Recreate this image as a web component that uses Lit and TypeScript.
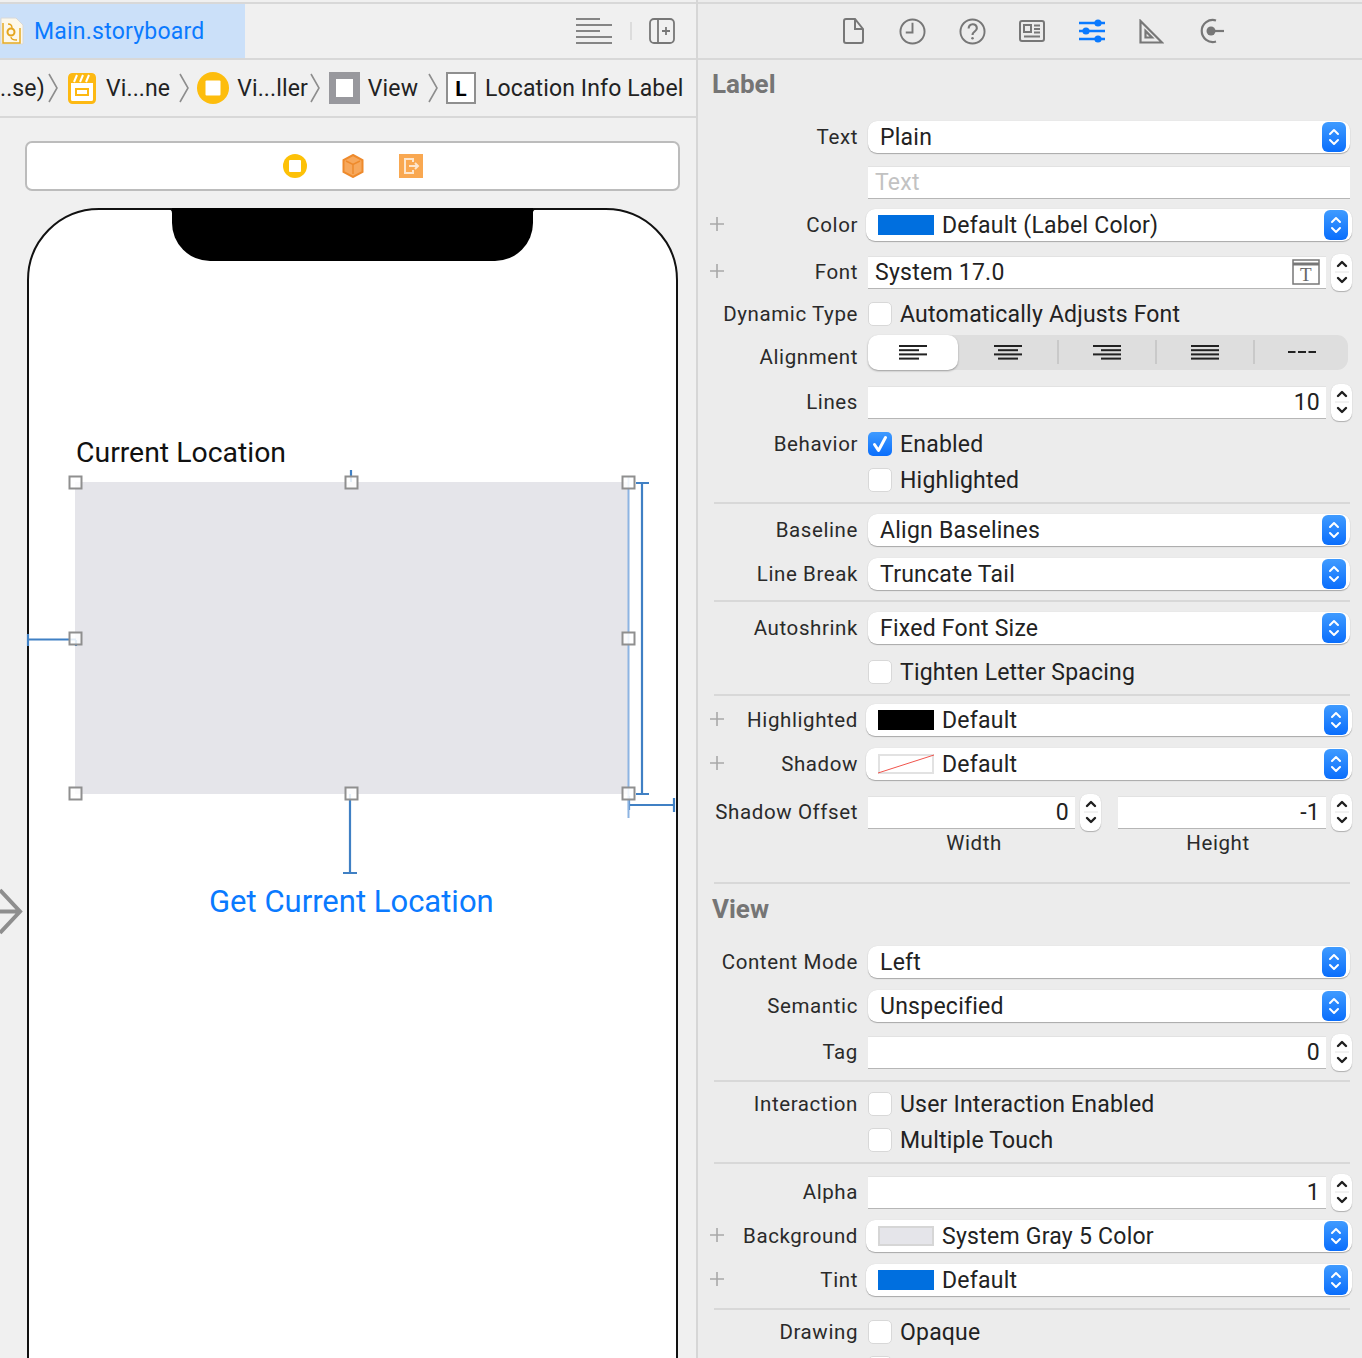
import { LitElement, html, css, svg } from 'lit';
import { customElement } from 'lit/decorators.js';

const updown = html`<svg width="12" height="20" viewBox="0 0 12 20" fill="none" stroke="currentColor" stroke-width="2" stroke-linecap="round" stroke-linejoin="round"><path d="M2 7l4-4 4 4M2 13l4 4 4-4"/></svg>`;

const plus = html`<svg class="plus" width="14" height="14" viewBox="0 0 14 14"><path d="M7 0v14M0 7h14" stroke="#a8a8a8" stroke-width="1.6"/></svg>`;

const alignIcon = (widths: number[], anchor: 'l' | 'c' | 'r') => html`<svg width="28" height="16" viewBox="0 0 28 16">
  ${widths.map((w, i) => {
    const x = anchor === 'l' ? 0 : anchor === 'c' ? (28 - w) / 2 : 28 - w;
    return svg`<rect x=${x} y=${1 + i * 4.2} width=${w} height="2" fill="#222"/>`;
  })}
</svg>`;

@customElement('app-root')
export class AppRoot extends LitElement {
  static styles = css`
    :host {
      display: flex;
      width: 1362px;
      height: 1358px;
      overflow: hidden;
      font-family: Roboto, 'Liberation Sans', sans-serif;
      color: #222;
      background: #ececec;
    }
    .left {
      width: 696px;
      height: 1358px;
      display: flex;
      flex-direction: column;
      background: #f0f0f0;
      border-right: 2px solid #d6d6d6;
      flex: none;
    }
    .tabbar {
      height: 54px;
      margin-top: 2px;
      border-top: 2px solid #d8d8d8;
      border-bottom: 2px solid #d8d8d8;
      display: flex;
      align-items: center;
      flex: none;
    }
    .tab {
      width: 245px;
      height: 100%;
      background: #cbe0f9;
      display: flex;
      align-items: center;
      gap: 10px;
      color: #0a7aff;
      font-size: 23px;
      letter-spacing: 0.22px;
    }
    .tabtools {
      margin-left: auto;
      display: flex;
      align-items: center;
      padding-right: 21px;
    }
    .tooldiv {
      width: 2px;
      height: 18px;
      background: #dcdcdc;
      margin: 0 17px 0 18px;
    }
    .crumbs {
      height: 56px;
      border-bottom: 2px solid #d8d8d8;
      display: flex;
      align-items: center;
      font-size: 23px;
      letter-spacing: 0.12px;
      color: #222;
      white-space: nowrap;
      flex: none;
    }
    .crumbs > * {
      flex: none;
    }
    .c1 { width: 48px; }
    .ch { width: 10px; height: 30px; }
    .g2 { margin-left: 2px; }
    .g8 { margin-left: 8px; }
    .g9 { margin-left: 9px; }
    .g10 { margin-left: 10px; }
    .canvas {
      position: relative;
      flex: 1;
      overflow: hidden;
      padding: 23px 16px 0 25px;
    }
    .dock {
      height: 50px;
      box-sizing: border-box;
      background: #fff;
      border: 2px solid #bcbcbc;
      border-radius: 7px;
      display: flex;
      align-items: center;
      justify-content: center;
      gap: 35px;
    }
    .phone {
      position: absolute;
      left: 27px;
      top: 90px;
      width: 651px;
      height: 1400px;
      box-sizing: border-box;
      background: #fff;
      border: 2px solid #111;
      border-radius: 72px;
    }
    .notch {
      position: absolute;
      left: 143px;
      top: -2px;
      width: 361px;
      height: 53px;
      background: #000;
      border-radius: 0 0 38px 38px;
    }
    .canvas-text {
      position: absolute;
      white-space: nowrap;
    }
    .current {
      left: 47px;
      top: 225px;
      font-size: 28.4px;
      line-height: 36px;
      color: #111;
    }
    .getloc {
      left: 180px;
      top: 672px;
      font-size: 31px;
      line-height: 40px;
      color: #0a7aff;
    }
    .grayview {
      position: absolute;
      left: 46px;
      top: 272px;
      width: 553px;
      height: 312px;
      background: #e5e5ea;
    }
    .overlay {
      position: absolute;
      left: 0;
      top: 0;
      pointer-events: none;
    }
    .right {
      flex: 1;
      min-width: 0;
      display: flex;
      flex-direction: column;
      background: #ececec;
    }
    .toolbar {
      height: 54px;
      margin-top: 2px;
      border-top: 2px solid #d8d8d8;
      border-bottom: 2px solid #d8d8d8;
      display: flex;
      align-items: center;
      justify-content: center;
      padding-left: 4px;
      flex: none;
    }
    .toolbtn {
      width: 60px;
      display: flex;
      justify-content: center;
    }
    .doc {
      margin-left: 4px;
    }
    .tri {
      margin-right: 2px;
    }
    .form {
      flex: 1;
      overflow: hidden;
      box-sizing: border-box;
      padding: 0 12px 0 16px;
      display: grid;
      grid-template-columns: 144px 1fr;
      column-gap: 10px;
      align-items: center;
      grid-template-rows:
        58px 38px 52px 34px 60px 24px 52px 48px 36px 36px
        10px 44px 44px 10px 44px 44px 2px 48px 40px 56px
        6px 32px 10px 48px 52px 36px 56px 2px 44px 28px
        18px 40px 48px 40px 18px 28px 44px;
    }
    .title {
      grid-column: 1 / 3;
      align-self: start;
      font-size: 26px;
      line-height: 42px;
      font-weight: 700;
      color: #757575;
      margin-left: -2px;
    }
    .title.first {
      margin-top: 3px;
    }
    .sep {
      grid-column: 1 / 3;
      height: 2px;
      background: #d8d8d8;
    }
    .spacer {
      grid-column: 1 / 3;
    }
    .label {
      position: relative;
      text-align: right;
      font-size: 20.5px;
      letter-spacing: 0.6px;
      line-height: 24px;
      color: #2a2a2a;
      white-space: nowrap;
    }
    .label.low {
      padding-top: 9px;
    }
    .plus {
      position: absolute;
      left: -4px;
      top: 4px;
    }
    .ctl {
      min-width: 0;
    }
    .select {
      height: 32px;
      background: #fff;
      border-radius: 9px;
      box-shadow: 0 1px 1px rgba(0, 0, 0, 0.28), 0 0 1px rgba(0, 0, 0, 0.12);
      display: flex;
      align-items: center;
      padding-left: 12px;
      padding-right: 4px;
      font-size: 23px;
      letter-spacing: 0.25px;
      color: #222;
      white-space: nowrap;
    }
    .select.wide {
      margin: 0 -2px;
    }
    .swatch {
      width: 56px;
      height: 20px;
      box-sizing: border-box;
      margin-right: 8px;
      flex: none;
      display: block;
    }
    .sw-blue { background: #006fdf; }
    .sw-black { background: #000; }
    .sw-gray { background: #e5e5ea; border: 2px solid #d6d6d6; }
    .spin {
      margin-left: auto;
      width: 24px;
      height: 30px;
      border-radius: 6px;
      background: linear-gradient(#3f9bff, #0a6efc);
      color: #fff;
      display: flex;
      align-items: center;
      justify-content: center;
      flex: none;
    }
    .field {
      height: 33px;
      box-sizing: border-box;
      background: #fff;
      border-bottom: 1.5px solid #b6b6b6;
      border-top: 1px solid #e2e2e2;
      display: flex;
      align-items: center;
      font-size: 23px;
      letter-spacing: 0.25px;
      padding: 0 6px 0 7px;
      color: #222;
      min-width: 0;
      flex: 1;
    }
    .field.num {
      justify-content: flex-end;
    }
    .field .ph {
      color: #c2c2c2;
    }
    .field svg {
      margin-left: auto;
    }
    .fieldrow {
      display: flex;
      align-items: center;
      margin-right: -2px;
    }
    .fieldrow.input {
      margin-right: 0;
    }
    .stepper {
      width: 21px;
      height: 37px;
      margin-left: 5px;
      flex: none;
      background: #fff;
      border-radius: 8px;
      box-shadow: 0 1px 1px rgba(0, 0, 0, 0.25), 0 0 1px rgba(0, 0, 0, 0.12);
      color: #1e1e1e;
      display: flex;
      align-items: center;
      justify-content: center;
    }
    .pair {
      display: flex;
      margin-right: -2px;
    }
    .pair .fieldrow {
      width: 233px;
      margin-right: 0;
    }
    .pair .fieldrow + .fieldrow {
      width: 234px;
      margin-left: 17px;
    }
    .caps {
      grid-column: 2;
      display: flex;
      font-size: 20.5px;
      letter-spacing: 0.55px;
      line-height: 24px;
      color: #2a2a2a;
      text-align: center;
    }
    .caps span {
      width: 212px;
    }
    .caps span + span {
      width: 208px;
      margin-left: 34px;
    }
    .check {
      display: flex;
      align-items: center;
      gap: 8px;
      font-size: 23px;
      letter-spacing: 0.2px;
      color: #222;
      white-space: nowrap;
    }
    .box {
      width: 24px;
      height: 24px;
      box-sizing: border-box;
      border-radius: 5px;
      background: #fff;
      border: 1px solid #d8d8d8;
      flex: none;
      display: flex;
      align-items: center;
      justify-content: center;
    }
    .box.on {
      background: linear-gradient(#3f9bff, #0a6efc);
      border: none;
    }
    .seg {
      height: 35px;
      width: 480px;
      background: #dedede;
      border-radius: 11px;
      display: flex;
      align-items: center;
    }
    .seg > div {
      display: flex;
      align-items: center;
      justify-content: center;
      height: 24px;
      box-sizing: border-box;
    }
    .seg .active {
      width: 90px;
      height: 35px;
      background: #fff;
      border-radius: 10px;
      box-shadow: 0 1px 2px rgba(0, 0, 0, 0.35);
    }
    .seg .cell {
      width: 98px;
    }
    .seg .cell.first {
      width: 99px;
    }
    .seg .cell.last {
      width: 95px;
    }
    .seg .cell.div {
      border-left: 2px solid #c9c9c9;
    }
  `;

  row(label: string, control: unknown, hasPlus = false, low = false) {
    return html`<div class="label ${low ? 'low' : ''}">${hasPlus ? plus : ''}${label}</div><div class="ctl">${control}</div>`;
  }

  select(text: string, swatch = '') {
    return html`<div class="select ${swatch ? 'wide' : ''}">
      ${swatch === 'shadow'
        ? html`<svg class="swatch" width="56" height="20" viewBox="0 0 56 20"><rect x="1" y="1" width="54" height="18" fill="#fff" stroke="#e2e2e2" stroke-width="2"/><path d="M0 19L56 1" stroke="#f0544c" stroke-width="1"/></svg>`
        : swatch
        ? html`<span class="swatch sw-${swatch}"></span>`
        : ''}
      <span>${text}</span>
      <div class="spin">${updown}</div>
    </div>`;
  }

  check(text: string, on = false) {
    return html`<div class="check">
      <div class="box ${on ? 'on' : ''}">
        ${on ? html`<svg width="16" height="18" viewBox="0 0 16 18"><path d="M2.500 9.500l4 6L13.500 2.500" fill="none" stroke="#fff" stroke-width="3" stroke-linecap="round" stroke-linejoin="round"/></svg>` : ''}
      </div>
      <span>${text}</span>
    </div>`;
  }

  numField(value: string) {
    return html`<div class="fieldrow">
      <div class="field num">${value}</div>
      <div class="stepper">${this.stepIcon()}</div>
    </div>`;
  }

  stepIcon() {
    return html`<svg width="14" height="30" viewBox="0 0 14 30" fill="none" stroke="currentColor" stroke-width="2.400" stroke-linecap="round" stroke-linejoin="round"><path d="M3 9l4-4 4 4M3 21l4 4 4-4"/><path d="M0 15h14" stroke="#e4e4e4" stroke-width="1"/></svg>`;
  }

  chevron(gap = '') {
    return html`<svg class="ch ${gap}" viewBox="0 0 10 30" fill="none"><path d="M1 1l8 14-8 14" stroke="#8d8d8d" stroke-width="1.600"/></svg>`;
  }

  inspectorIcon(i: number) {
    const c = '#777';
    const icons = [
      html`<svg class="doc" width="22" height="28" viewBox="0 0 22 28" fill="none" stroke="${c}" stroke-width="2"><path d="M3 2h9l8 10v12a2 2 0 0 1-2 2H3a2 2 0 0 1-2-2V4a2 2 0 0 1 2-2z"/><path d="M12 2v10h8"/></svg>`,
      html`<svg width="27" height="27" viewBox="0 0 28 28" fill="none" stroke="${c}" stroke-width="2"><circle cx="14" cy="14" r="12.500"/><path d="M14 5v10H7"/></svg>`,
      html`<svg width="27" height="27" viewBox="0 0 28 28" fill="none" stroke="${c}" stroke-width="2"><circle cx="14" cy="14" r="12.500"/><path d="M10 11c0-6 8.500-6 8.500-.5 0 3.500-4.500 3.500-4.500 7" stroke-width="2.200"/><circle cx="14" cy="21" r="1.300" fill="${c}" stroke="none"/></svg>`,
      html`<svg width="26" height="22" viewBox="0 0 26 22" fill="none" stroke="${c}" stroke-width="2"><rect x="1" y="1" width="24" height="20" rx="2"/><rect x="5" y="5" width="7" height="7"/><path d="M15 5.500h6M15 9h6M15 12.500h6M5 16.500h16"/></svg>`,
      html`<svg width="26" height="24" viewBox="0 0 26 24" fill="#0a7aff" stroke="#0a7aff" stroke-width="2"><path d="M0 4h26M0 12h26M0 20h26" fill="none" stroke-width="2.400"/><circle cx="19" cy="4" r="2.600"/><circle cx="7" cy="12" r="2.600"/><circle cx="19" cy="20" r="2.600"/></svg>`,
      html`<svg class="tri" width="25" height="25" viewBox="0 0 25 25" fill="none" stroke="${c}" stroke-width="2.200"><path d="M1.500 2v21.500H23z"/><path d="M6.500 12v6.500h6.500z"/></svg>`,
      html`<svg class="tri" width="26" height="26" viewBox="0 0 26 26" fill="none" stroke="${c}" stroke-width="2.200"><path d="M18 2.500A11 11 0 1 0 18 23.500"/><path d="M13 13h13"/><circle cx="13" cy="13" r="4.500" fill="${c}" stroke="none"/></svg>`,
    ];
    return icons[i];
  }

  handles() {
    const xs = [75.5, 351.5, 628.500];
    const ys = [482.5, 638.5, 793.500];
    const pts: [number, number][] = [];
    for (const y of ys) {
      for (const x of xs) {
        if (x === 351.5 && y === 638.5) continue;
        pts.push([x, y]);
      }
    }
    return pts.map(([x, y]) => svg`<rect x=${x - 6} y=${y - 6} width="12" height="12" fill="rgba(255,255,255,0.85)" stroke="#8f8f8f" stroke-width="2"/>`);
  }

  render() {
    return html`
      <div class="left">
        <div class="tabbar">
          <div class="tab">
            <svg width="24" height="30" viewBox="0 0 24 30"><path d="M1 2h15l7 7v19H1z" fill="#fdf8ea" stroke="#d8d8d8"/><path d="M3 7v20h17V12" fill="none" stroke="#e5ab24" stroke-width="1.500"/><circle cx="11" cy="16" r="3.500" fill="none" stroke="#e5a51d" stroke-width="2"/><path d="M8 8c4 0 4 3 4 4M11 21c0 3 3 3 6 3" fill="none" stroke="#e5a51d" stroke-width="1.300"/></svg>
            <span>Main.storyboard</span>
          </div>
          <div class="tabtools">
            <svg width="36" height="26" viewBox="0 0 36 26"><path d="M0 1h24M0 7h36M0 13h24M0 19h36M0 25h36" stroke="#858585" stroke-width="1.800"/></svg>
            <div class="tooldiv"></div>
            <svg width="26" height="26" viewBox="0 0 26 26" fill="none" stroke="#777" stroke-width="1.800"><rect x="1" y="1" width="24" height="24" rx="4"/><path d="M9 1v24M13 13h8M17 9v8"/></svg>
          </div>
        </div>
        <div class="crumbs">
          <span class="c1">..se)</span>
          ${this.chevron()}
          <svg class="g10" width="28" height="31" viewBox="0 0 28 31"><rect x="1.500" y="1.500" width="25" height="28" rx="3" fill="#fff" stroke="#fdb913" stroke-width="3"/><rect x="1" y="1" width="26" height="9" rx="2" fill="#fdb913"/><path d="M6 9l3-7M12 9l3-7M18 9l3-7" stroke="#fff" stroke-width="2"/><rect x="8" y="16" width="12" height="6" fill="#fff" stroke="#fdb913" stroke-width="2"/></svg>
          <span class="g10">Vi...ne</span>
          ${this.chevron('g9')}
          <svg class="g8" width="32" height="32" viewBox="0 0 32 32"><circle cx="16" cy="16" r="16" fill="#fdbd0d"/><rect x="8.500" y="8.500" width="15" height="15" rx="1" fill="#fff"/></svg>
          <span class="g8">Vi...ller</span>
          ${this.chevron('g2')}
          <svg class="g9" width="31" height="32" viewBox="0 0 31 32"><rect width="31" height="32" fill="#98989d"/><rect x="7" y="7" width="17" height="18" fill="#fff"/></svg>
          <span class="g8">View</span>
          ${this.chevron('g10')}
          <svg class="g8" width="30" height="32" viewBox="0 0 30 32"><rect x="1" y="1" width="28" height="30" fill="#fff" stroke="#8f8f8f" stroke-width="2"/><text x="15" y="24" font-family="Roboto" font-size="21" font-weight="700" fill="#000" text-anchor="middle">L</text></svg>
          <span class="g9">Location Info Label</span>
        </div>
        <div class="canvas">
          <div class="dock">
            <svg width="24" height="24" viewBox="0 0 24 24"><circle cx="12" cy="12" r="12" fill="#fdc107"/><rect x="6" y="6" width="12" height="12" rx="1" fill="#fff"/></svg>
            <svg width="22" height="24" viewBox="0 0 22 24"><path d="M11 1l9.500 5v12L11 23l-9.500-5V6z" fill="#f7a85c" stroke="#ee8a2c" stroke-width="2"/><path d="M4 7l7 3.500L18 7M11 10.500V20" fill="none" stroke="#ee8a2c" stroke-width="1.500"/></svg>
            <svg width="24" height="24" viewBox="0 0 24 24"><rect width="24" height="24" fill="#f9a851"/><path d="M14 8V5H6v14h8v-3M10 12h9M16 9l3 3-3 3" fill="none" stroke="#fde6cd" stroke-width="2"/></svg>
          </div>
          <div class="phone">
            <div class="notch"></div>
            <div class="canvas-text current">Current Location</div>
            <div class="grayview"></div>
            <div class="canvas-text getloc">Get Current Location</div>
          </div>
          <svg class="overlay" width="696" height="1240" viewBox="0 118 696 1240">
            <path d="M168 209.500c3 0 4 1 4 4v-4zM537 209.500c-3 0-4 1-4 4v-4z" fill="#000"/>
            <g stroke="#4080c4" stroke-width="2.200" fill="none">
              <path d="M28 639.500h48M28 634v12M76 640v6"/>
              <path d="M351 470v12"/>
              <path d="M350 794v80M343 873h14"/>
              <path d="M642 483v310M636 483h13M636 794h13"/>
              <path d="M629 805h45M629 796v14M674 798v14"/>
            </g>
            <path d="M628.500 476v342" stroke="#8db4e2" stroke-width="2" fill="none"/>
            ${this.handles()}
            <path d="M-10 911.500h28M0 890l20 21.500L0 933" fill="none" stroke="#8e8e8e" stroke-width="4"/>
          </svg>
        </div>
      </div>
      <div class="right">
        <div class="toolbar">
          ${[0, 1, 2, 3, 4, 5, 6].map((i) => html`<div class="toolbtn">${this.inspectorIcon(i)}</div>`)}
        </div>
        <div class="form">
          <div class="title first">Label</div>
          ${this.row('Text', this.select('Plain'))}
          <div></div>
          <div class="fieldrow input"><div class="field"><span class="ph">Text</span></div></div>
          ${this.row('Color', this.select('Default (Label Color)', 'blue'), true)}
          ${this.row('Font', html`<div class="fieldrow">
            <div class="field">System 17.0
              <svg width="28" height="26" viewBox="0 0 28 26" fill="none" stroke="#777" stroke-width="1.500"><rect x="1" y="1" width="26" height="24"/><path d="M1 5h26" stroke-width="3"/><text x="14" y="22" font-family="Liberation Serif" font-size="19" fill="#666" stroke="none" text-anchor="middle">T</text></svg>
            </div>
            <div class="stepper">${this.stepIcon()}</div>
          </div>`, true)}
          ${this.row('Dynamic Type', this.check('Automatically Adjusts Font'))}
          ${this.row('Alignment', html`<div class="seg">
            <div class="active">${alignIcon([28, 20, 28, 20], 'l')}</div>
            <div class="cell first">${alignIcon([28, 20, 28, 20], 'c')}</div>
            <div class="cell div">${alignIcon([28, 20, 28, 20], 'r')}</div>
            <div class="cell div">${alignIcon([28, 28, 28, 28], 'l')}</div>
            <div class="cell div last"><svg width="28" height="4" viewBox="0 0 28 4"><path d="M0 2h7.500M10 2h8M20.500 2h7.500" stroke="#222" stroke-width="2"/></svg></div>
          </div>`, false, true)}
          ${this.row('Lines', this.numField('10'))}
          ${this.row('Behavior', this.check('Enabled', true))}
          ${this.row('', this.check('Highlighted'))}
          <div class="sep"></div>
          ${this.row('Baseline', this.select('Align Baselines'))}
          ${this.row('Line Break', this.select('Truncate Tail'))}
          <div class="sep"></div>
          ${this.row('Autoshrink', this.select('Fixed Font Size'))}
          ${this.row('', this.check('Tighten Letter Spacing'))}
          <div class="sep"></div>
          ${this.row('Highlighted', this.select('Default', 'black'), true)}
          ${this.row('Shadow', this.select('Default', 'shadow'), true)}
          ${this.row('Shadow Offset', html`<div class="pair">${this.numField('0')}${this.numField('-1')}</div>`)}
          <div></div>
          <div class="caps"><span>Width</span><span>Height</span></div>
          <div class="spacer"></div>
          <div class="sep"></div>
          <div class="title">View</div>
          ${this.row('Content Mode', this.select('Left'))}
          ${this.row('Semantic', this.select('Unspecified'))}
          ${this.row('Tag', this.numField('0'))}
          <div class="sep"></div>
          ${this.row('Interaction', this.check('User Interaction Enabled'))}
          ${this.row('', this.check('Multiple Touch'))}
          <div class="sep"></div>
          ${this.row('Alpha', this.numField('1'))}
          ${this.row('Background', this.select('System Gray 5 Color', 'gray'), true)}
          ${this.row('Tint', this.select('Default', 'blue'), true)}
          <div class="sep"></div>
          ${this.row('Drawing', this.check('Opaque'))}
          ${this.row('', this.check(''))}
        </div>
      </div>
    `;
  }
}
